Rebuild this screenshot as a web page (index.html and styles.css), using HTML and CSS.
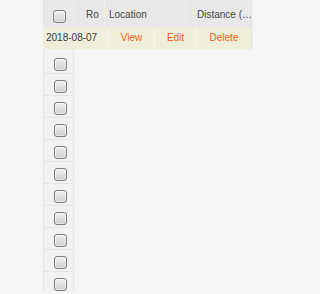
FILE: index.html
```html
<!DOCTYPE html>
<html>
<head>
<meta charset="utf-8">
<link rel="stylesheet" href="styles.css">
</head>
<body>
<div class="grid">
  <div class="head">
    <div class="hcell c-check"><span class="cb"></span></div>
    <div class="hcell c-ro">Ro</div>
    <div class="hcell c-loc">Location</div>
    <div class="hcell c-dist">Distance (…</div>
  </div>
  <div class="datarow">
    <div class="dcell d-date">2018-08-07</div>
    <div class="dcell d-link d-view">View</div>
    <div class="dcell d-link d-edit">Edit</div>
    <div class="dcell d-link d-del">Delete</div>
  </div>
  <div class="checkcol">
    <div class="crow"><span class="cb"></span></div>
    <div class="crow"><span class="cb"></span></div>
    <div class="crow"><span class="cb"></span></div>
    <div class="crow"><span class="cb"></span></div>
    <div class="crow"><span class="cb"></span></div>
    <div class="crow"><span class="cb"></span></div>
    <div class="crow"><span class="cb"></span></div>
    <div class="crow"><span class="cb"></span></div>
    <div class="crow"><span class="cb"></span></div>
    <div class="crow"><span class="cb"></span></div>
    <div class="crow last"><span class="cb"></span></div>
  </div>
</div>
</body>
</html>
```
FILE: styles.css
```css
html, body {
  margin: 0;
  padding: 0;
  background: #f4f5f4;
  height: 294px;
  overflow: hidden;
  font-family: "Liberation Sans", Arial, sans-serif;
  font-size: 10px;
}
.grid {
  margin-left: 43px;
  width: 208px;
}
.head {
  display: flex;
  height: 27px;
  background: #e8e8e8;
  box-shadow: 1px 0 1px rgba(0,0,0,0.07);
}
.hcell {
  box-sizing: border-box;
  height: 27px;
  padding-top: 2px;
  line-height: 25px;
  color: #454545;
  white-space: nowrap;
  overflow: hidden;
  border-right: 1px solid #efefef;
}
.c-check { width: 31px; padding: 10px 0 0 10px; line-height: 0; }
.c-ro { width: 31px; padding-left: 12px; }
.c-loc { width: 81px; padding-left: 4px; }
.c-dist { width: 65px; padding-left: 11px; border-right: none; }
.datarow {
  display: flex;
  height: 22px;
  background: #efeedb;
  box-shadow: 1px 0 1px rgba(0,0,0,0.07);
}
.dcell {
  box-sizing: border-box;
  height: 22px;
  line-height: 22px;
  white-space: nowrap;
  border-right: 1px solid #f6f6ea;
}
.d-date { width: 66px; padding-left: 3px; color: #383838; }
.d-link { text-align: center; color: #ef5d14; }
.d-view { width: 46px; }
.d-edit { width: 42px; }
.d-del { width: 54px; border-right: none; }
.checkcol {
  box-sizing: border-box;
  width: 31px;
  padding-top: 3px;
  background: #f2f2f2;
  border-left: 1px solid #e6e6e6;
  border-right: 1px solid #e6e6e6;
}
.crow {
  box-sizing: border-box;
  height: 22px;
  padding: 6px 0 0 10px;
  border-bottom: 1px solid #e5e5e5;
  line-height: 0;
}
.crow.last { height: 19px; border-bottom: none; }
.cb {
  display: inline-block;
  box-sizing: border-box;
  width: 13px;
  height: 13px;
  border: 1px solid #7b7b7b;
  border-radius: 3px;
  background: linear-gradient(#f0f0f0, #cfcfcf);
  box-shadow: inset 0 0 0 1px rgba(255,255,255,0.5);
}
```
